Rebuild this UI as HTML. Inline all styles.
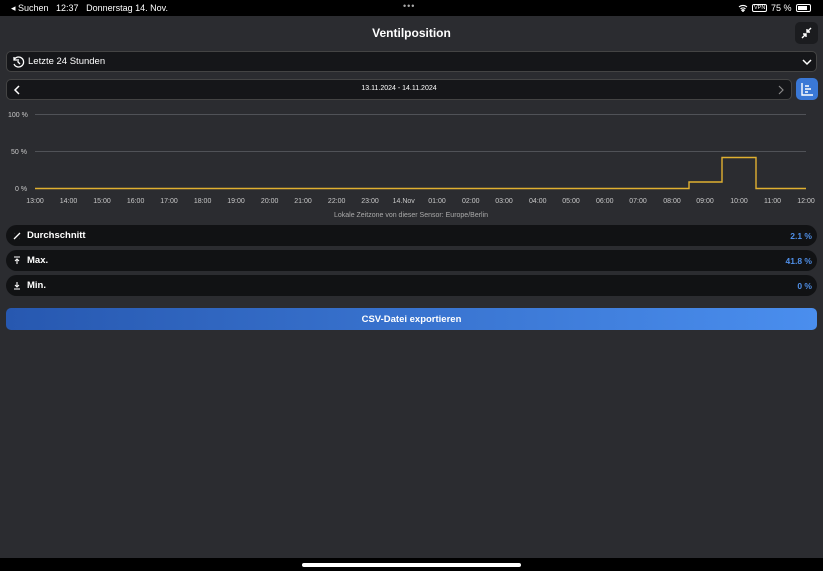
<!DOCTYPE html>
<html><head><meta charset="utf-8"><style>
*{margin:0;padding:0;box-sizing:border-box}
body{width:823px;height:571px;background:#2b2c30;font-family:"Liberation Sans",sans-serif;color:#fff;position:relative;overflow:hidden}
.abs{position:absolute}
.sb{top:0;left:0;width:823px;height:16px;background:#000;font-size:9px}
.row{left:6px;width:811px;height:21px;background:#111214;border-radius:11px}
.lbl{font-size:9.5px;font-weight:bold;top:5px;left:21px}
.val{font-size:8.5px;font-weight:bold;color:#4f8fe8;top:6px;right:5px}
</style></head><body>
<div class="abs sb">
<span class="abs" style="left:11px;top:3px">◂ Suchen&nbsp;&nbsp; 12:37&nbsp;&nbsp; Donnerstag 14. Nov.</span>
<span class="abs" style="left:403px;top:1px;letter-spacing:1px;color:#aaa">•••</span>
<svg class="abs" style="left:738px;top:4px" width="10" height="8"><path d="M1 3a6 6 0 0 1 8 0M2.5 4.8a4 4 0 0 1 5 0M5 7.5l1.3-1.3a2 2 0 0 0-2.6 0z" stroke="#fff" stroke-width="1.1" fill="none"/></svg>
<span class="abs" style="left:752px;top:4px;border:1px solid #fff;border-radius:2px;font-size:5.5px;line-height:6px;padding:0 1px">VPN</span>
<span class="abs" style="left:771px;top:3px">75 %</span>
<div class="abs" style="left:796px;top:4px;width:15px;height:8px;border:1px solid #fff;border-radius:2px;padding:1px"><div style="width:9px;height:4px;background:#fff"></div></div>
</div>
<div class="abs" style="top:26px;width:823px;text-align:center;font-size:12px;font-weight:bold">Ventilposition</div>
<div class="abs" style="left:795px;top:22px;width:23px;height:22px;background:#1b1c1f;border-radius:5px"><svg width="23" height="22"><path d="M7 16l4-4M8 12h3v3M16 6l-4 4M12 7v3h3" stroke="#fff" stroke-width="1.4" fill="none"/></svg></div>
<div class="abs" style="left:6px;top:51px;width:811px;height:21px;background:#151619;border:1px solid #444;border-radius:5px">
<svg class="abs" style="left:4px;top:3px" width="14" height="14"><path d="M3 5a5 5 0 1 1 0 4M3 2v3h3M7 4v3l2 2" stroke="#fff" stroke-width="1.3" fill="none"/></svg>
<span class="abs" style="left:21px;top:4px;font-size:9.5px">Letzte 24 Stunden</span>
<svg class="abs" style="right:4px;top:5px" width="10" height="10"><path d="M1 3l4 4 4-4" stroke="#fff" stroke-width="1.5" fill="none"/></svg></div>
<div class="abs" style="left:6px;top:79px;width:786px;height:21px;background:#151619;border:1px solid #444;border-radius:5px">
<svg class="abs" style="left:6px;top:5px" width="8" height="10"><path d="M6 1L2 5l4 4" stroke="#fff" stroke-width="1.5" fill="none"/></svg>
<span class="abs" style="left:0;width:100%;text-align:center;top:5px;font-size:7px">13.11.2024 - 14.11.2024</span>
<svg class="abs" style="right:6px;top:5px" width="8" height="10"><path d="M2 1l4 4-4 4" stroke="#888" stroke-width="1.2" fill="none"/></svg></div>
<div class="abs" style="left:796px;top:78px;width:22px;height:22px;background:#3a78d6;border-radius:5px"><svg width="22" height="22"><path d="M6 5v12h11M9 8h4M9 11h6M9 14h3" stroke="#fff" stroke-width="1.4" fill="none"/></svg></div>
<svg class="abs" style="left:0;top:105px" width="823" height="115">
<g stroke="#505257" stroke-width="1"><line x1="35" y1="9.5" x2="806" y2="9.5"/><line x1="35" y1="46.5" x2="806" y2="46.5"/></g>
<path d="M35 83.5H689V77H722V52.5H756V83.5H806" stroke="#e0b030" stroke-width="1.4" fill="none"/>
<g font-size="7" fill="#c8c8c8" font-family="Liberation Sans"><text x="8" y="12">100 %</text><text x="11" y="49">50 %</text><text x="15" y="86">0 %</text></g>
<g font-size="7" fill="#c8c8c8" font-family="Liberation Sans" text-anchor="middle">
<text x="35" y="98">13:00</text><text x="68.5" y="98">14:00</text><text x="102" y="98">15:00</text><text x="135.6" y="98">16:00</text><text x="169" y="98">17:00</text><text x="202.6" y="98">18:00</text><text x="236" y="98">19:00</text><text x="269.7" y="98">20:00</text><text x="303" y="98">21:00</text><text x="336.7" y="98">22:00</text><text x="370" y="98">23:00</text><text x="403.7" y="98">14.Nov</text><text x="437" y="98">01:00</text><text x="470.8" y="98">02:00</text><text x="504" y="98">03:00</text><text x="537.8" y="98">04:00</text><text x="571" y="98">05:00</text><text x="604.8" y="98">06:00</text><text x="638" y="98">07:00</text><text x="672" y="98">08:00</text><text x="705" y="98">09:00</text><text x="739" y="98">10:00</text><text x="772.5" y="98">11:00</text><text x="806" y="98">12:00</text>
<text x="411" y="112" fill="#aaa">Lokale Zeitzone von dieser Sensor: Europe/Berlin</text></g>
</svg>
<div class="abs row" style="top:225px"><svg class="abs" style="left:7px;top:7px" width="8" height="8"><path d="M1 7L7 1M1.5 1.5h.1M6.5 6.5h.1" stroke="#fff" stroke-width="1.3" fill="none"/></svg><span class="abs lbl">Durchschnitt</span><span class="abs val">2.1 %</span></div>
<div class="abs row" style="top:250px"><svg class="abs" style="left:7px;top:6px" width="8" height="9"><path d="M1 1h6M4 8V3M2 5l2-2 2 2" stroke="#fff" stroke-width="1.1" fill="none"/></svg><span class="abs lbl">Max.</span><span class="abs val">41.8 %</span></div>
<div class="abs row" style="top:275px"><svg class="abs" style="left:7px;top:6px" width="8" height="9"><path d="M1 8h6M4 1v5M2 4l2 2 2-2" stroke="#fff" stroke-width="1.1" fill="none"/></svg><span class="abs lbl">Min.</span><span class="abs val">0 %</span></div>
<div class="abs" style="left:6px;top:308px;width:811px;height:22px;border-radius:5px;background:linear-gradient(90deg,#2758b0,#4a8eee);text-align:center;font-size:9.5px;font-weight:bold;padding-top:6px">CSV-Datei exportieren</div>
<div class="abs" style="left:0;top:558px;width:823px;height:13px;background:#000"><div class="abs" style="left:302px;top:5px;width:219px;height:4px;border-radius:2px;background:#fff"></div></div>
</body></html>
